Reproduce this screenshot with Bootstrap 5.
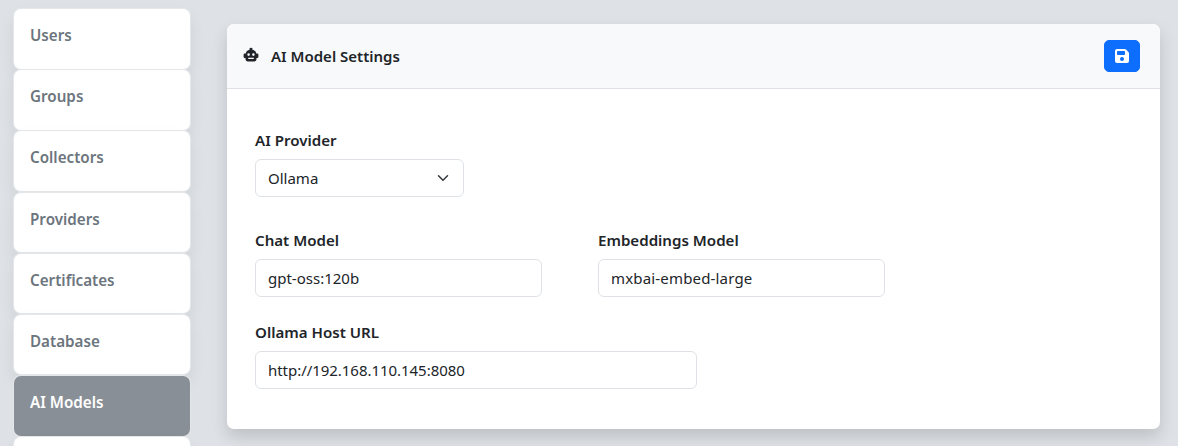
<!DOCTYPE html>
<html lang="en"><head><meta charset="utf-8"><title>AI Model Settings</title>
<link href="https://cdn.jsdelivr.net/npm/bootstrap@5.3.0/dist/css/bootstrap.min.css" rel="stylesheet">
<style>
html,body{height:446px;overflow:hidden}
body{background:#dee2e6;font-family:"Noto Sans",sans-serif;color:#212529}
.shell{padding:9px 18px 0 14px;gap:37px}
.side-menu{width:176px;flex:none;height:437px;overflow:visible}
.side-link{display:block;height:59.5px;margin-bottom:1.7px;padding:15px 16px 0;background:#fff;border-radius:7px;color:#6c757d;font-weight:560;font-size:15.2px;line-height:22px;text-decoration:none;box-shadow:0 0 0 1px #e4e7ea,0 8px 16px rgba(0,0,0,.08)}
.side-link.is-on{background:#898f96;color:#fff;box-shadow:0 0 0 1px #e4e7ea}
.panel{margin-top:15px;height:405px;border:0;border-radius:7px;box-shadow:0 8px 16px rgba(0,0,0,.15);overflow:hidden}
.panel-head{height:65px;padding:0 20px 0 16px;background:#f8f9fa;border-bottom:1px solid #dee2e6}
.panel-title{font-size:15px;font-weight:560;line-height:22px;margin-top:-1px}
.robot{width:16px;height:16px;margin-right:12px;position:relative;top:-1px}
.save-btn{width:36px;height:32px;padding:0;border-radius:5px}
.panel-body{padding:40px 28px 0}
.fld-label{display:block;font-size:15.1px;font-weight:560;line-height:21px;padding-top:1px;margin-bottom:8px}
.fld{height:38px;font-size:15px;border-color:#dee2e6;border-radius:6px;color:#212529}
.w-select{width:209px}.w-half{width:287px}.w-url{width:442px}
.fields{gap:56px}
.gap-a{margin-bottom:32px}.gap-b{margin-bottom:24px}
.fld-wide{letter-spacing:.17px}
.fld-url{letter-spacing:-.04px}
</style></head><body>
<div class="shell d-flex align-items-start">
<nav class="side-menu">
<a class="side-link" href="#">Users</a>
<a class="side-link" href="#">Groups</a>
<a class="side-link" href="#">Collectors</a>
<a class="side-link" href="#">Providers</a>
<a class="side-link" href="#">Certificates</a>
<a class="side-link" href="#">Database</a>
<a class="side-link is-on" href="#">AI Models</a>
<a class="side-link" href="#" aria-hidden="true"></a>
</nav>
<main class="card panel flex-grow-1">
<div class="panel-head d-flex align-items-center justify-content-between">
<div class="panel-title d-flex align-items-center">
<svg class="robot" viewBox="0 0 16 16" aria-hidden="true"><path fill="#212529" fill-rule="evenodd" d="M8 .8a1.400 1.400 0 0 1 1.300 1.900C11.500 3 13 4.600 13.300 6.500h.9A1.200 1.200 0 0 1 15.400 7.700v2a1.200 1.200 0 0 1-1.200 1.200h-.7V12.300a2.100 2.100 0 0 1-2.100 2.100H4.600a2.100 2.100 0 0 1-2.100-2.100V10.900H1.800A1.200 1.200 0 0 1 .6 9.700v-2a1.200 1.200 0 0 1 1.200-1.200h.9C3 4.600 4.500 3 6.700 2.700A1.400 1.400 0 0 1 8 .8zM5.600 6.300a1.300 1.300 0 1 0 0 2.600 1.300 1.300 0 0 0 0-2.600zm4.800 0a1.300 1.300 0 1 0 0 2.600 1.300 1.300 0 0 0 0-2.600zM5.200 10.800v1.100h5.600v-1.100z"/></svg>
<span>AI Model Settings</span></div>
<button type="button" class="btn btn-primary save-btn d-flex align-items-center justify-content-center" aria-label="Save">
<svg width="14" height="16" viewBox="0 0 448 512" aria-hidden="true"><path fill="#fff" d="M64 32C28.700 32 0 60.700 0 96V416c0 35.300 28.700 64 64 64H384c35.300 0 64-28.700 64-64V173.300c0-17-6.700-33.300-18.700-45.300L352 50.700C340 38.700 323.700 32 306.700 32H64zm0 96c0-17.700 14.300-32 32-32H288c17.700 0 32 14.300 32 32v64c0 17.700-14.300 32-32 32H96c-17.700 0-32-14.300-32-32V128zM224 288a64 64 0 1 1 0 128 64 64 0 1 1 0-128z"/></svg>
</button>
</div>
<div class="panel-body">
<div class="gap-a"><label class="fld-label">AI Provider</label>
<select class="form-select fld w-select"><option>Ollama</option></select></div>
<div class="d-flex fields gap-b">
<div><label class="fld-label">Chat Model</label><input class="form-control fld w-half" value="gpt-oss:120b"></div>
<div><label class="fld-label">Embeddings Model</label><input class="form-control fld w-half fld-wide" value="mxbai-embed-large"></div>
</div>
<div><label class="fld-label">Ollama Host URL</label><input class="form-control fld w-url fld-url" value="http://192.168.110.145:8080"></div>
</div>
</main>
</div>
<script src="https://cdn.jsdelivr.net/npm/bootstrap@5.3.0/dist/js/bootstrap.bundle.min.js"></script>
</body></html>
